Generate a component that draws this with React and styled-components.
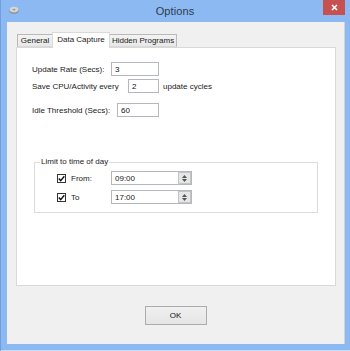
import React from "react";
import styled, { createGlobalStyle } from "styled-components";

const Global = createGlobalStyle`
  html, body { margin: 0; padding: 0; background: #ffffff; }
  body { font-family: "Liberation Sans", Arial, sans-serif; }
  * { box-sizing: border-box; }
`;

const Window = styled.div`
  width: 350px;
  height: 351px;
  background: #8cb9f1;
  box-shadow: inset 1px 0 0 #6f9fdc, inset 0 -1px 0 #c9dcf3;
  display: flex;
  flex-direction: column;
`;

const TitleBar = styled.div`
  height: 22px;
  display: grid;
  grid-template-columns: 1fr auto 1fr;
  align-items: start;
`;

const IconCell = styled.div`
  padding: 6px 0 0 9px;
  display: flex;
`;

const Title = styled.div`
  font-size: 11px;
  line-height: 22px;
  color: #2d3b4c;
  letter-spacing: 0.1px;
`;

const CloseCell = styled.div`
  display: flex;
  justify-content: flex-end;
  padding-right: 5px;
`;

const CloseButton = styled.div`
  width: 22px;
  height: 15px;
  background: #c75050;
  display: flex;
  align-items: center;
  justify-content: center;
`;

const Client = styled.div`
  margin: 0 5px 7px 7px;
  height: 322px;
  background: #f0f0f0;
  border-right: 1px solid #d4d4d4;
  display: flex;
  flex-direction: column;
  padding: 10px 0 0 9px;
  font-size: 8px;
  color: #1a1a1a;
`;

const TabControl = styled.div`
  width: 320px;
  display: flex;
  flex-direction: column;
`;

const TabStrip = styled.div`
  height: 15px;
  display: flex;
  align-items: flex-end;
  padding-left: 1px;
`;

const Tab = styled.div`
  position: relative;
  width: ${(p) => p.w}px;
  height: ${(p) => (p.active ? 16 : 13)}px;
  margin-bottom: ${(p) => (p.active ? -1 : 0)}px;
  background: ${(p) => (p.active ? "#ffffff" : "linear-gradient(#f3f3f3, #e8e8e8)")};
  border: 1px solid ${(p) => (p.active ? "#d9d9d9" : "#b9b9b9")};
  border-bottom: ${(p) => (p.active ? "none" : "1px solid #d9d9d9")};
  ${(p) => (p.next ? "border-left: none;" : "")}
  ${(p) => (p.prev ? "border-right: none;" : "")}
  z-index: ${(p) => (p.active ? 2 : 1)};
  display: flex;
  align-items: center;
  justify-content: center;
  font-size: 8px;
  color: #1a1a1a;
  padding-bottom: ${(p) => (p.active ? 2 : 0)}px;
  white-space: nowrap;
`;

const Panel = styled.div`
  height: 239px;
  background: #ffffff;
  border: 1px solid #d9d9d9;
  padding: 14px 0 0 15px;
  display: flex;
  flex-direction: column;
`;

const FieldRow = styled.div`
  display: flex;
  align-items: center;
  height: 14px;
  margin-top: ${(p) => p.gap || 0}px;
`;

const Label = styled.span`
  width: ${(p) => p.w}px;
  flex: none;
  white-space: nowrap;
`;

const TextBox = styled.div`
  width: ${(p) => p.w}px;
  height: 14px;
  border: 1px solid #b4b7bd;
  background: #ffffff;
  display: flex;
  align-items: center;
  padding-left: 3px;
  font-size: 8px;
  color: #111;
  flex: none;
`;

const After = styled.span`
  margin-left: 4px;
  white-space: nowrap;
`;

const Group = styled.div`
  position: relative;
  margin: 45px 0 0 2px;
  width: 284px;
  height: 51px;
  border: 1px solid #dcdcdc;
  padding-top: 8px;
  display: flex;
  flex-direction: column;
`;

const GroupLabel = styled.span`
  position: absolute;
  top: -6px;
  left: 5px;
  padding: 0 1px;
  background: #ffffff;
  line-height: 10px;
  white-space: nowrap;
`;

const CheckRow = styled.div`
  display: flex;
  align-items: center;
  height: 14px;
  padding-left: 22px;
  margin-top: ${(p) => p.gap || 0}px;
`;

const CheckBox = styled.div`
  width: 9px;
  height: 9px;
  border: 1px solid #333;
  background: #fff;
  display: flex;
  align-items: center;
  justify-content: center;
  flex: none;
  margin-right: 5px;
`;

const CheckLabel = styled.span`
  width: 40px;
  flex: none;
`;

const TimeBox = styled.div`
  width: 81px;
  height: 14px;
  border: 1px solid #b4b7bd;
  background: #fff;
  display: flex;
  align-items: center;
  padding-left: 3px;
  flex: none;
`;

const TimeText = styled.span`
  flex: 1;
`;

const Spinner = styled.div`
  width: 13px;
  height: 12px;
  background: #e6e6e6;
  border: 1px solid #c4c4c4;
  display: flex;
  flex-direction: column;
  align-items: center;
  justify-content: center;
  gap: 1px;
`;

const ButtonRow = styled.div`
  display: flex;
  justify-content: center;
  margin-top: 20px;
  padding-right: 9px;
`;

const Button = styled.div`
  width: 62px;
  height: 19px;
  border: 1px solid #acacac;
  background: linear-gradient(#f0f0f0, #e5e5e5);
  display: flex;
  align-items: center;
  justify-content: center;
  font-size: 8px;
  color: #111;
`;

const AppIcon = () => (
  <svg width="10" height="8" viewBox="0 0 10 8">
    <ellipse cx="5" cy="4.5" rx="4.6" ry="3.3" fill="#8a8a8a" />
    <ellipse cx="5" cy="3.6" rx="4.4" ry="2.8" fill="#d6d6d6" />
    <ellipse cx="5" cy="3.6" rx="1.6" ry="0.9" fill="#9a9a9a" />
  </svg>
);

const CloseX = () => (
  <svg width="7" height="7" viewBox="0 0 7 7">
    <path d="M1 1 L6 6 M6 1 L1 6" stroke="#fff" strokeWidth="1.6" />
  </svg>
);

const Check = () => (
  <svg width="7" height="7" viewBox="0 0 7 7">
    <path d="M0.8 3.6 L2.7 5.6 L6.3 1.2" stroke="#111" strokeWidth="1.4" fill="none" />
  </svg>
);

const Arrow = ({ up }) => (
  <svg width="5" height="3" viewBox="0 0 5 3">
    <path d={up ? "M0 3 L2.5 0 L5 3 Z" : "M0 0 L2.5 3 L5 0 Z"} fill="#555" />
  </svg>
);

const TimeField = ({ value }) => (
  <TimeBox>
    <TimeText>{value}</TimeText>
    <Spinner>
      <Arrow up />
      <Arrow />
    </Spinner>
  </TimeBox>
);

export default function App() {
  return (
    <>
      <Global />
      <Window>
        <TitleBar>
          <IconCell>
            <AppIcon />
          </IconCell>
          <Title>Options</Title>
          <CloseCell>
            <CloseButton>
              <CloseX />
            </CloseButton>
          </CloseCell>
        </TitleBar>
        <Client>
          <TabControl>
            <TabStrip>
              <Tab w={35} prev>General</Tab>
              <Tab w={58} active>Data Capture</Tab>
              <Tab w={67} next>Hidden Programs</Tab>
            </TabStrip>
            <Panel>
              <FieldRow>
                <Label w={79}>Update Rate (Secs):</Label>
                <TextBox w={48}>3</TextBox>
              </FieldRow>
              <FieldRow gap={3}>
                <Label w={96}>Save CPU/Activity every</Label>
                <TextBox w={31}>2</TextBox>
                <After>update cycles</After>
              </FieldRow>
              <FieldRow gap={10}>
                <Label w={85}>Idle Threshold (Secs):</Label>
                <TextBox w={42}>60</TextBox>
              </FieldRow>
              <Group>
                <GroupLabel>Limit to time of day</GroupLabel>
                <CheckRow>
                  <CheckBox>
                    <Check />
                  </CheckBox>
                  <CheckLabel>From:</CheckLabel>
                  <TimeField value="09:00" />
                </CheckRow>
                <CheckRow gap={5}>
                  <CheckBox>
                    <Check />
                  </CheckBox>
                  <CheckLabel>To</CheckLabel>
                  <TimeField value="17:00" />
                </CheckRow>
              </Group>
            </Panel>
          </TabControl>
          <ButtonRow>
            <Button>OK</Button>
          </ButtonRow>
        </Client>
      </Window>
    </>
  );
}
